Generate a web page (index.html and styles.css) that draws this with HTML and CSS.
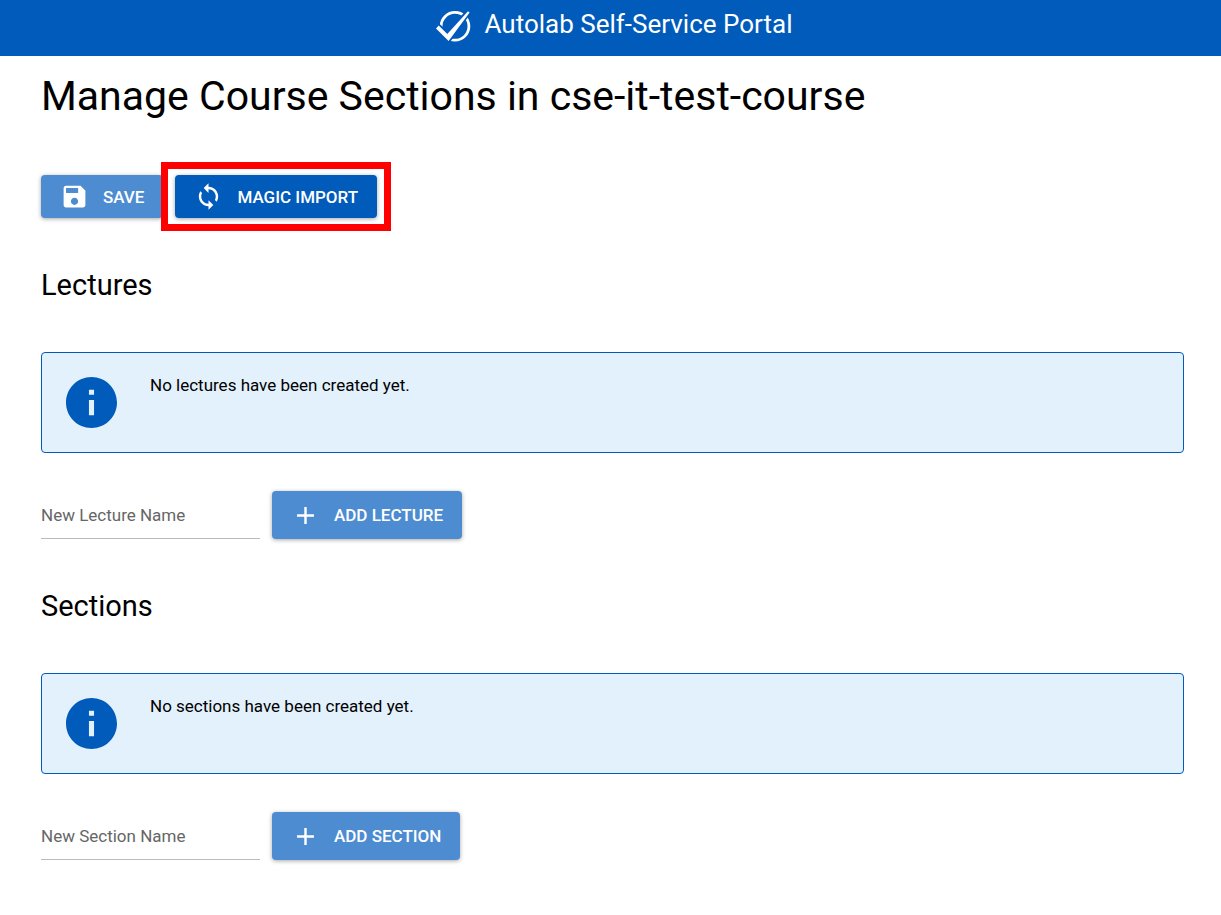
FILE: index.html
```html
<!DOCTYPE html>
<html lang="en">
<head>
<meta charset="utf-8">
<meta name="viewport" content="width=device-width, initial-scale=1">
<title>Autolab Self-Service Portal</title>
<link rel="stylesheet" href="styles.css">
</head>
<body>
<header class="app-bar">
  <svg class="app-logo" viewBox="0 0 36 36" aria-hidden="true">
    <circle cx="19" cy="18.300" r="13.900" fill="none" stroke="#fff" stroke-width="2.800"/>
    <path d="M0 20 3 16.500 11.500 23.500 31.500 2 34.500 4.500 13 34.500Z" fill="#005bbb" stroke="#005bbb" stroke-width="1.400"/>
    <path d="M0 20.500 2.700 17.600 11.300 26 32 3.200 33.600 4.600 12.600 33Z" fill="#fff"/>
  </svg>
  <span class="app-name">Autolab Self-Service Portal</span>
</header>
<main class="page">
  <h1 class="title">Manage Course Sections in cse-it-test-course</h1>
  <div class="actions">
    <button class="btn btn-muted" type="button">
      <svg class="icon" viewBox="0 0 24 24" aria-hidden="true"><path d="M17 3H5c-1.110 0-2 .9-2 2v14c0 1.100.890 2 2 2h14c1.100 0 2-.9 2-2V7l-4-4zm-5 16c-1.660 0-3-1.340-3-3s1.340-3 3-3 3 1.340 3 3-1.340 3-3 3zm3-10H5V5h10v4z"/></svg>
      SAVE
    </button>
    <div class="highlight">
      <button class="btn" type="button">
        <svg class="icon" viewBox="0 0 24 24" aria-hidden="true"><path d="M12 4V1L8 5l4 4V6c3.310 0 6 2.690 6 6 0 1.010-.25 1.970-.7 2.800l1.460 1.460C19.540 15.030 20 13.570 20 12c0-4.420-3.580-8-8-8zm0 14c-3.310 0-6-2.690-6-6 0-1.010.25-1.970.7-2.800L5.240 7.740C4.460 8.970 4 10.430 4 12c0 4.420 3.580 8 8 8v3l4-4-4-4v3z"/></svg>
        MAGIC IMPORT
      </button>
    </div>
  </div>

  <section class="group">
    <h2 class="subtitle">Lectures</h2>
    <div class="notice">
      <svg class="notice-icon" viewBox="2 2 20 20" aria-hidden="true"><path d="M12 2C6.480 2 2 6.480 2 12s4.480 10 10 10 10-4.480 10-10S17.520 2 12 2zm1 15h-2v-6h2v6zm0-8h-2V7h2v2z"/></svg>
      <p class="notice-text">No lectures have been created yet.</p>
    </div>
    <form class="add-row">
      <input class="field" type="text" placeholder="New Lecture Name" aria-label="New Lecture Name">
      <button class="btn btn-muted btn-tall" type="button">
        <svg class="icon" viewBox="0 0 24 24" aria-hidden="true"><path d="M19 13h-6v6h-2v-6H5v-2h6V5h2v6h6v2z"/></svg>
        ADD LECTURE
      </button>
    </form>
  </section>

  <section class="group">
    <h2 class="subtitle">Sections</h2>
    <div class="notice">
      <svg class="notice-icon" viewBox="2 2 20 20" aria-hidden="true"><path d="M12 2C6.480 2 2 6.480 2 12s4.480 10 10 10 10-4.480 10-10S17.520 2 12 2zm1 15h-2v-6h2v6zm0-8h-2V7h2v2z"/></svg>
      <p class="notice-text">No sections have been created yet.</p>
    </div>
    <form class="add-row">
      <input class="field" type="text" placeholder="New Section Name" aria-label="New Section Name">
      <button class="btn btn-muted btn-tall" type="button">
        <svg class="icon" viewBox="0 0 24 24" aria-hidden="true"><path d="M19 13h-6v6h-2v-6H5v-2h6V5h2v6h6v2z"/></svg>
        ADD SECTION
      </button>
    </form>
  </section>
</main>
</body>
</html>
```
FILE: styles.css
```css
* {
  box-sizing: border-box;
}

body {
  margin: 0;
  background: #fff;
  color: #000;
  font-family: Roboto, "Liberation Sans", sans-serif;
  font-size: 17px;
}

.app-bar {
  display: flex;
  align-items: center;
  justify-content: center;
  gap: 12px;
  padding: 6px 0 14px 8px;
  background: #005bbb;
  color: #fff;
}

.app-logo {
  width: 36px;
  height: 36px;
  margin-top: 2px;
  margin-bottom: -2px;
}

.app-name {
  font-size: 26px;
  line-height: 36px;
}

.page {
  padding: 16px 37px 40px 41px;
}

.title {
  margin: 0 0 55px;
  font-size: 41px;
  font-weight: 400;
  line-height: 48px;
}

.actions {
  display: flex;
  gap: 12px;
}

.btn {
  display: flex;
  align-items: center;
  gap: 14px;
  height: 43px;
  padding: 0 19px;
  border: 0;
  border-radius: 4px;
  background: #005bbb;
  box-shadow: 0 1px 4px rgba(0, 0, 0, 0.35);
  color: #fff;
  font: 500 17px Roboto, "Liberation Sans", sans-serif;
  white-space: nowrap;
}

.btn-muted {
  background: #4d8cd0;
}

.btn-tall {
  height: 48px;
}

.icon {
  width: 29px;
  height: 29px;
  fill: currentColor;
}

.highlight {
  position: relative;
}

.highlight::before {
  content: "";
  position: absolute;
  inset: -13px -14px;
  border: 7px solid #f00;
  pointer-events: none;
}

.group {
  padding-top: 47px;
}

.subtitle {
  margin: 0 0 47px;
  font-size: 29px;
  font-weight: 400;
  line-height: 40px;
}

.notice {
  display: flex;
  gap: 33px;
  padding: 24px;
  border: 1px solid #005bbb;
  border-radius: 4px;
  background: #e3f1fd;
}

.notice-icon {
  flex: none;
  width: 51px;
  height: 51px;
  fill: #005bbb;
}

.notice-text {
  margin: 0;
  line-height: 16px;
}

.add-row {
  display: flex;
  gap: 12px;
  margin-top: 38px;
}

.field {
  width: 219px;
  height: 48px;
  padding: 0;
  border: 0;
  border-bottom: 1px solid #bbb;
  border-radius: 0;
  background: transparent;
  color: #000;
  font: 17px Roboto, "Liberation Sans", sans-serif;
}

.field::placeholder {
  color: #666;
  opacity: 1;
}
```
